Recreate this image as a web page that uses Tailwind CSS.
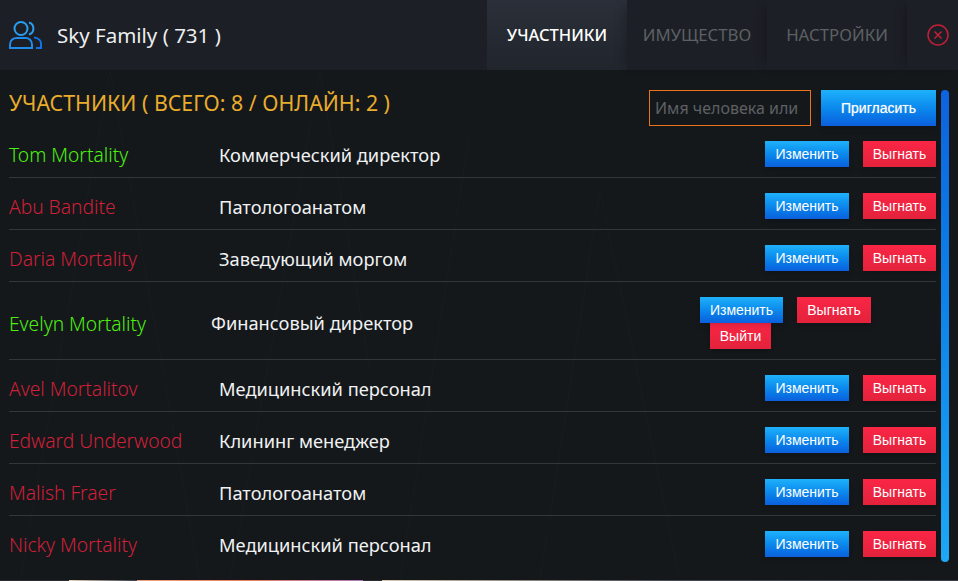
<!DOCTYPE html>
<html lang="ru">

<head>
  <meta charset="UTF-8">
  <meta name="viewport" content="width=device-width, initial-scale=1.0">
  <title>Sky Family</title>
  <script src="https://cdn.jsdelivr.net/npm/@tailwindcss/browser@4"></script>
</head>

<body class="bg-[#14181b] h-[581px] w-[958px] overflow-hidden font-['Noto_Sans',sans-serif] relative">

  <!-- faint line pattern behind the list -->
  <svg class="absolute left-0 top-[70px] w-[958px] h-[511px]" viewBox="0 0 958 511" fill="none" stroke="#181c20">
    <path d="M20 511L110 0M110 0L200 511M230 511L320 0M320 0L370 300M400 511L470 60M540 511L600 120M600 120L680 511"/>
  </svg>

  <header class="relative h-[70px] bg-[#1c1f25] flex items-center">
    <svg class="ml-[9px] w-[33px] h-[30px]" viewBox="0 0 33 30" fill="none" stroke-width="2">
      <circle cx="12" cy="8.500" r="6.500" stroke="#2a9df0"/>
      <path d="M20 2.500a6.300 6.300 0 0 1 0 12" stroke="#2a9df0"/>
      <path d="M1 28v-3.500c0-4 3-6.500 6.500-6.500h9c3.500 0 6.500 2.500 6.500 6.500v3.500z" stroke="#1f8cec"/>
      <path d="M25 17.500c4 .5 7 3 7 6v4.500h-5" stroke="#1272e3"/>
    </svg>
    <h1 class="ml-[15px] text-[20.500px] text-[#eceef0]">Sky Family ( 731 )</h1>
    <nav class="ml-auto flex h-full text-[16.800px]">
      <a class="w-[140px] flex items-center justify-center bg-gradient-to-b from-[#2a2f39] to-[#21252c] text-white text-[16.500px] font-medium">УЧАСТНИКИ</a>
      <a class="w-[140px] flex items-center justify-center text-[#5d6064] shadow-[-8px_0_10px_-6px_rgba(0,0,0,0.25)]">ИМУЩЕСТВО</a>
      <a class="w-[140px] flex items-center justify-center text-[#5d6064] shadow-[-8px_0_10px_-6px_rgba(0,0,0,0.25)]">НАСТРОЙКИ</a>
      <div class="w-[51px] flex items-center pl-[20px] shadow-[-8px_0_10px_-6px_rgba(0,0,0,0.25)]">
        <svg class="w-[22px] h-[22px]" viewBox="0 0 22 22" fill="none" stroke="#c41e38" stroke-width="1.500">
          <circle cx="11" cy="11" r="10"/>
          <path d="M7.500 7.500l7 7M14.500 7.500l-7 7"/>
        </svg>
      </div>
    </nav>
  </header>

  <main class="relative pl-[9px] w-[936px]">
    <div class="h-[60px] flex items-start">
      <h2 class="mt-[17px] text-[21.300px] text-[#e9ac2c]">УЧАСТНИКИ ( ВСЕГО: 8 / ОНЛАЙН: 2 )</h2>
      <input placeholder="Имя человека или" class="ml-auto mt-[20px] w-[162px] h-[36px] border border-[#e8741e] bg-transparent px-[5px] text-[16px] placeholder:text-[#5e6063] outline-none">
      <button class="ml-[10px] mt-[20px] w-[115px] h-[36px] bg-gradient-to-b from-[#1fb1fb] to-[#0d5fdd] text-white text-[14px] font-['Liberation_Sans',sans-serif] [text-shadow:0_0_1px_rgba(255,255,255,0.6)] shadow-md">Пригласить</button>
    </div>

    <div class="flex items-center h-[48px] pt-[2px] border-b border-[#34373a]">
      <span class="w-[210px] mt-[2px] text-[19.200px] font-light text-[#4df010]">Tom Mortality</span>
      <span class="text-[18.250px] text-[#f0f1f2]">Коммерческий директор</span>
      <div class="ml-auto -mt-[1px] flex gap-[14px] font-['Liberation_Sans',sans-serif] text-[14px] text-white [text-shadow:0_0_1px_rgba(255,255,255,0.6)]">
        <button class="w-[84px] h-[26px] bg-gradient-to-b from-[#1fb1fb] to-[#0d5fdd] shadow-md">Изменить</button>
        <button class="w-[73px] h-[26px] bg-gradient-to-b from-[#fa2645] to-[#e3223c] shadow-md">Выгнать</button>
      </div>
    </div>

    <div class="flex items-center h-[52px] pt-[6px] border-b border-[#34373a]">
      <span class="w-[210px] mt-[2px] text-[19.200px] font-light text-[#d01f39]">Abu Bandite</span>
      <span class="text-[18.250px] text-[#f0f1f2]">Патологоанатом</span>
      <div class="ml-auto -mt-[1px] flex gap-[14px] font-['Liberation_Sans',sans-serif] text-[14px] text-white [text-shadow:0_0_1px_rgba(255,255,255,0.6)]">
        <button class="w-[84px] h-[26px] bg-gradient-to-b from-[#1fb1fb] to-[#0d5fdd] shadow-md">Изменить</button>
        <button class="w-[73px] h-[26px] bg-gradient-to-b from-[#fa2645] to-[#e3223c] shadow-md">Выгнать</button>
      </div>
    </div>

    <div class="flex items-center h-[52px] pt-[6px] border-b border-[#34373a]">
      <span class="w-[210px] mt-[2px] text-[19.200px] font-light text-[#d01f39]">Daria Mortality</span>
      <span class="text-[18.250px] text-[#f0f1f2]">Заведующий моргом</span>
      <div class="ml-auto -mt-[1px] flex gap-[14px] font-['Liberation_Sans',sans-serif] text-[14px] text-white [text-shadow:0_0_1px_rgba(255,255,255,0.6)]">
        <button class="w-[84px] h-[26px] bg-gradient-to-b from-[#1fb1fb] to-[#0d5fdd] shadow-md">Изменить</button>
        <button class="w-[73px] h-[26px] bg-gradient-to-b from-[#fa2645] to-[#e3223c] shadow-md">Выгнать</button>
      </div>
    </div>

    <div class="flex items-center h-[78px] pt-[5px] border-b border-[#34373a]">
      <span class="w-[202px] mt-[2px] text-[19.200px] font-light text-[#4df010]">Evelyn Mortality</span>
      <span class="text-[18.250px] text-[#f0f1f2]">Финансовый директор</span>
      <div class="ml-auto w-[236px] font-['Liberation_Sans',sans-serif] text-[14px] text-white [text-shadow:0_0_1px_rgba(255,255,255,0.6)]">
        <div class="flex gap-[14px]">
          <button class="w-[83px] h-[26px] bg-gradient-to-b from-[#1fb1fb] to-[#0d5fdd] shadow-md">Изменить</button>
          <button class="w-[74px] h-[26px] bg-gradient-to-b from-[#fa2645] to-[#e3223c] shadow-md">Выгнать</button>
        </div>
        <button class="block ml-[10px] w-[61px] h-[26px] bg-gradient-to-b from-[#fa2645] to-[#e3223c] shadow-md">Выйти</button>
      </div>
    </div>

    <div class="flex items-center h-[52px] pt-[6px] border-b border-[#34373a]">
      <span class="w-[210px] mt-[2px] text-[19.200px] font-light text-[#d01f39]">Avel Mortalitov</span>
      <span class="text-[18.250px] text-[#f0f1f2]">Медицинский персонал</span>
      <div class="ml-auto -mt-[1px] flex gap-[14px] font-['Liberation_Sans',sans-serif] text-[14px] text-white [text-shadow:0_0_1px_rgba(255,255,255,0.6)]">
        <button class="w-[84px] h-[26px] bg-gradient-to-b from-[#1fb1fb] to-[#0d5fdd] shadow-md">Изменить</button>
        <button class="w-[73px] h-[26px] bg-gradient-to-b from-[#fa2645] to-[#e3223c] shadow-md">Выгнать</button>
      </div>
    </div>

    <div class="flex items-center h-[52px] pt-[6px] border-b border-[#34373a]">
      <span class="w-[210px] mt-[2px] text-[19.200px] font-light text-[#d01f39]">Edward Underwood</span>
      <span class="text-[18.250px] text-[#f0f1f2]">Клининг менеджер</span>
      <div class="ml-auto -mt-[1px] flex gap-[14px] font-['Liberation_Sans',sans-serif] text-[14px] text-white [text-shadow:0_0_1px_rgba(255,255,255,0.6)]">
        <button class="w-[84px] h-[26px] bg-gradient-to-b from-[#1fb1fb] to-[#0d5fdd] shadow-md">Изменить</button>
        <button class="w-[73px] h-[26px] bg-gradient-to-b from-[#fa2645] to-[#e3223c] shadow-md">Выгнать</button>
      </div>
    </div>

    <div class="flex items-center h-[52px] pt-[6px] border-b border-[#34373a]">
      <span class="w-[210px] mt-[2px] text-[19.200px] font-light text-[#d01f39]">Malish Fraer</span>
      <span class="text-[18.250px] text-[#f0f1f2]">Патологоанатом</span>
      <div class="ml-auto -mt-[1px] flex gap-[14px] font-['Liberation_Sans',sans-serif] text-[14px] text-white [text-shadow:0_0_1px_rgba(255,255,255,0.6)]">
        <button class="w-[84px] h-[26px] bg-gradient-to-b from-[#1fb1fb] to-[#0d5fdd] shadow-md">Изменить</button>
        <button class="w-[73px] h-[26px] bg-gradient-to-b from-[#fa2645] to-[#e3223c] shadow-md">Выгнать</button>
      </div>
    </div>

    <div class="flex items-center h-[51px] pt-[6px]">
      <span class="w-[210px] mt-[2px] text-[19.200px] font-light text-[#d01f39]">Nicky Mortality</span>
      <span class="text-[18.250px] text-[#f0f1f2]">Медицинский персонал</span>
      <div class="ml-auto -mt-[1px] flex gap-[14px] font-['Liberation_Sans',sans-serif] text-[14px] text-white [text-shadow:0_0_1px_rgba(255,255,255,0.6)]">
        <button class="w-[84px] h-[26px] bg-gradient-to-b from-[#1fb1fb] to-[#0d5fdd] shadow-md">Изменить</button>
        <button class="w-[73px] h-[26px] bg-gradient-to-b from-[#fa2645] to-[#e3223c] shadow-md">Выгнать</button>
      </div>
    </div>
  </main>

  <!-- scrollbar -->
  <div class="absolute left-[941px] top-[90px] w-[8px] h-[472px] rounded-full bg-gradient-to-b from-[#0f62de] to-[#1ea8f5]"></div>

  <!-- sliver of the page behind the window -->
  <div class="absolute left-0 top-[580px] w-[958px] h-[1px] flex">
    <div class="w-[69px] bg-[#2a2c30]"></div>
    <div class="w-[68px] bg-gradient-to-r from-[#e8d4b8] to-[#3a3f4a]"></div>
    <div class="w-[226px] bg-gradient-to-r from-[#f0a080] via-[#e8805f] to-[#a878b8]"></div>
    <div class="w-[19px] bg-[#2a2c30]"></div>
    <div class="flex-1 bg-gradient-to-r from-[#d8c8b0] via-[#454a52] to-[#3a3f47]"></div>
  </div>

</body>

</html>
